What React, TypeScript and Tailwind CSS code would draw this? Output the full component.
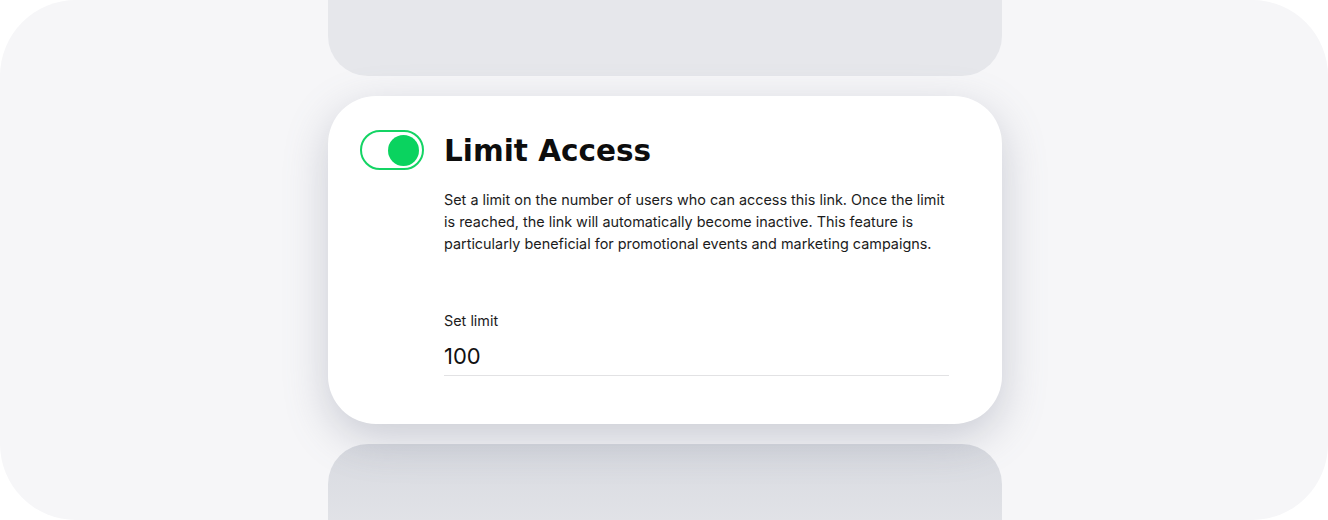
import { useState } from "react";

function Toggle({ on, onChange }: { on: boolean; onChange: () => void }) {
  return (
    <button
      onClick={onChange}
      className={`flex h-[40px] w-[64px] shrink-0 items-center rounded-full border-2 px-[3px] ${
        on ? "justify-end border-[#14d464]" : "justify-start border-gray-300"
      }`}
    >
      <span
        className={`h-[31px] w-[31px] rounded-full ${on ? "bg-[#0ad35f]" : "bg-gray-300"}`}
      />
    </button>
  );
}

export default function App() {
  const [enabled, setEnabled] = useState(true);
  const [limit, setLimit] = useState("100");

  return (
    <div className="flex h-[520px] w-[1328px] flex-col items-center overflow-hidden rounded-[76px] bg-[#f6f6f8] pl-[2px] font-['Inter',sans-serif]">
      {/* previous setting card, cut off */}
      <div className="-mt-[44px] h-[120px] w-[674px] shrink-0 rounded-[40px] bg-[#e6e7eb]" />

      <div className="relative z-10 mt-5 flex h-[328px] w-[674px] shrink-0 gap-5 rounded-[48px] bg-white pl-8 pr-[53px] pt-[34px] shadow-[0_14px_44px_rgba(110,116,138,0.32)]">
        <Toggle on={enabled} onChange={() => setEnabled(!enabled)} />

        <div className="flex flex-1 flex-col">
          <h2 className="mt-[3px] text-[29.5px] font-bold leading-[36px] text-[#0d0d0d] font-['DejaVu_Sans',sans-serif]">
            Limit Access
          </h2>
          <p className="mt-[20px] text-[14.4px] leading-[22px] text-[#1c1c1c]">
            Set a limit on the number of users who can access this link. Once the limit
            is reached, the link will automatically become inactive. This feature is
            particularly beneficial for promotional events and marketing campaigns.
          </p>

          <label className="mt-[56px] text-[14.4px] leading-[20px] text-[#1c1c1c]">
            Set limit
          </label>
          <input
            value={limit}
            onChange={(e) => setLimit(e.target.value)}
            className="mt-[12px] border-b border-[#e2e2e4] pb-[6px] text-[22px] leading-[26px] text-[#111] outline-none"
          />
        </div>
      </div>

      {/* next setting card, cut off */}
      <div className="mt-5 h-[120px] w-[674px] shrink-0 rounded-[40px] bg-gradient-to-b from-[#d8dae0] to-[#e6e7eb]" />
    </div>
  );
}
